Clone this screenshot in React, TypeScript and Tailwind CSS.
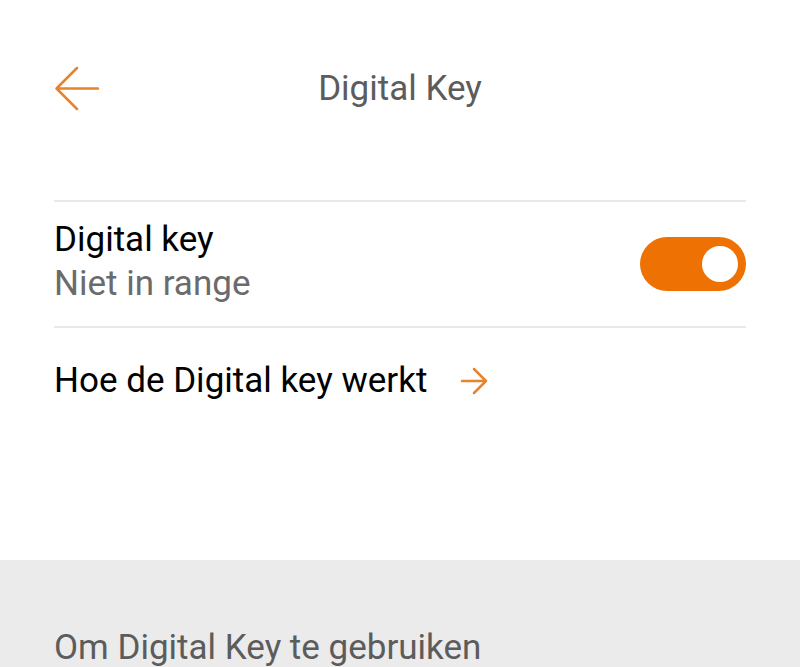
import { useState } from "react";

function BackArrow() {
  return (
    <svg width="46" height="46" viewBox="0 0 46 46" fill="none">
      <path
        d="M44 22.5H3M23 2L2.5 22.5L23 43"
        stroke="#e8822c"
        strokeWidth="2.5"
        strokeLinecap="round"
        strokeLinejoin="round"
      />
    </svg>
  );
}

function SmallArrow() {
  return (
    <svg width="28" height="28" viewBox="0 0 28 28" fill="none">
      <path
        d="M2 14H26M14 2L26 14L14 26"
        stroke="#e8822c"
        strokeWidth="2.5"
        strokeLinecap="round"
        strokeLinejoin="round"
      />
    </svg>
  );
}

function Toggle({ on, onChange }: { on: boolean; onChange: () => void }) {
  return (
    <button
      onClick={onChange}
      className={
        on
          ? "w-[106px] h-[54px] rounded-full bg-[#ee7203] flex items-center justify-end pr-[8px]"
          : "w-[106px] h-[54px] rounded-full bg-[#c9c9c9] flex items-center justify-start pl-[8px]"
      }
    >
      <span className="w-[36px] h-[36px] rounded-full bg-white block" />
    </button>
  );
}

export default function App() {
  const [enabled, setEnabled] = useState(true);

  return (
    <div className="w-[800px] h-[667px] overflow-hidden bg-white font-['Roboto',sans-serif] flex flex-col">
      {/* cabecera */}
      <div className="shrink-0 h-[180px] px-[54px] flex items-start pt-[66px]">
        <div className="w-[46px]">
          <BackArrow />
        </div>
        <div className="flex-1 text-center text-[35px] leading-[46px] text-[#5c5c5c] pr-[46px]">
          Digital Key
        </div>
      </div>

      <div className="shrink-0 px-[54px] pt-[20px]">
        <div className="h-[2px] bg-[#e8e8e8]" />
        <div className="flex items-center justify-between h-[124px]">
          <div className="flex flex-col pb-[4px]">
            <span className="text-[35px] leading-[44px] text-black">Digital key</span>
            <span className="text-[35px] leading-[44px] text-[#6b6b6b]">Niet in range</span>
          </div>
          <Toggle on={enabled} onChange={() => setEnabled(!enabled)} />
        </div>
        <div className="h-[2px] bg-[#e8e8e8]" />
        <div className="flex items-center gap-[33px] h-[106px]">
          <span className="text-[35px] leading-[44px] text-black">Hoe de Digital key werkt</span>
          <SmallArrow />
        </div>
      </div>

      <div className="shrink-0 mt-[126px] h-[200px] bg-[#ebebeb] px-[54px] pt-[66px]">
        <span className="text-[35px] leading-[44px] text-[#5c5c5c]">Om Digital Key te gebruiken</span>
      </div>
    </div>
  );
}
